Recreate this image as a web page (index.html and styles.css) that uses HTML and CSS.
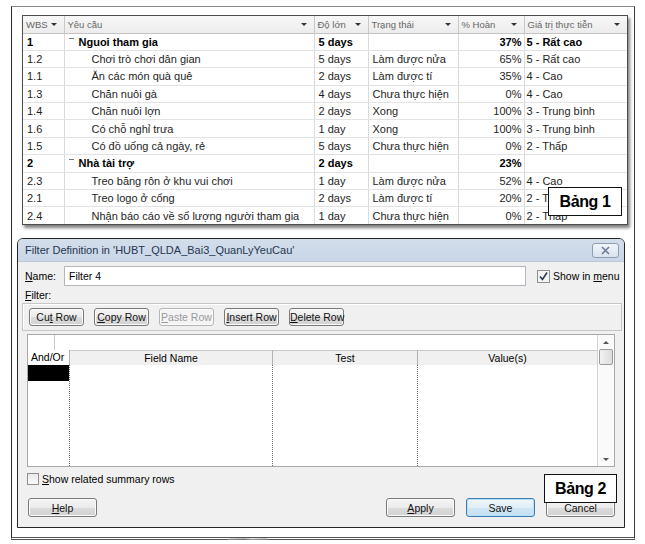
FILE: index.html
```html
<!DOCTYPE html>
<html lang="vi">
<head>
	<meta charset="UTF-8">
	<title>Bảng 1 - Bảng 2</title>
	<link rel="stylesheet" href="styles.css">
</head>
<body>
	<div class="frame">
		<div class="sheet">
			<table class="tasks">
				<colgroup>
					<col style="width:41px">
					<col style="width:250px">
					<col style="width:54px">
					<col style="width:90px">
					<col style="width:66px">
					<col>
				</colgroup>
				<thead>
					<tr>
						<th><div class="th"><span>WBS</span><i class="dd"></i></div></th>
						<th><div class="th"><span>Yêu cầu</span><i class="dd"></i></div></th>
						<th><div class="th"><span>Độ lớn</span><i class="dd"></i></div></th>
						<th><div class="th"><span>Trạng thái</span><i class="dd"></i></div></th>
						<th><div class="th"><span>% Hoàn</span><i class="dd"></i></div></th>
						<th><div class="th"><span>Giá trị thực tiễn</span><i class="dd"></i></div></th>
					</tr>
				</thead>
				<tbody>
					<tr class="sum">
						<td>1</td><td class="grp"><i class="minus"></i>Nguoi tham gia</td><td>5 days</td><td></td><td class="pct">37%</td><td class="val">5 - Rất cao</td>
					</tr>
					<tr>
						<td>1.2</td><td class="task">Chơi trò chơi dân gian</td><td>5 days</td><td>Làm được nửa</td><td class="pct">65%</td><td class="val">5 - Rất cao</td>
					</tr>
					<tr>
						<td>1.1</td><td class="task">Ăn các món quà quê</td><td>2 days</td><td>Làm được tí</td><td class="pct">35%</td><td class="val">4 - Cao</td>
					</tr>
					<tr>
						<td>1.3</td><td class="task">Chăn nuôi gà</td><td>4 days</td><td>Chưa thực hiện</td><td class="pct">0%</td><td class="val">4 - Cao</td>
					</tr>
					<tr>
						<td>1.4</td><td class="task">Chăn nuôi lợn</td><td>2 days</td><td>Xong</td><td class="pct">100%</td><td class="val">3 - Trung bình</td>
					</tr>
					<tr>
						<td>1.6</td><td class="task">Có chỗ nghỉ trưa</td><td>1 day</td><td>Xong</td><td class="pct">100%</td><td class="val">3 - Trung bình</td>
					</tr>
					<tr>
						<td>1.5</td><td class="task">Có đồ uống cả ngày, rẻ</td><td>5 days</td><td>Chưa thực hiện</td><td class="pct">0%</td><td class="val">2 - Thấp</td>
					</tr>
					<tr class="sum">
						<td>2</td><td class="grp"><i class="minus"></i>Nhà tài trợ</td><td>2 days</td><td></td><td class="pct">23%</td><td class="val"></td>
					</tr>
					<tr>
						<td>2.3</td><td class="task">Treo băng rôn ở khu vui chơi</td><td>1 day</td><td>Làm được nửa</td><td class="pct">52%</td><td class="val">4 - Cao</td>
					</tr>
					<tr>
						<td>2.1</td><td class="task">Treo logo ở cổng</td><td>2 days</td><td>Làm được tí</td><td class="pct">20%</td><td class="val">2 - Thấp</td>
					</tr>
					<tr>
						<td>2.4</td><td class="task">Nhận báo cáo về số lượng người tham gia</td><td>1 day</td><td>Chưa thực hiện</td><td class="pct">0%</td><td class="val">2 - Thấp</td>
					</tr>
				</tbody>
			</table>
			<div class="caption cap1">Bảng 1</div>
		</div>

		<div class="dialog">
			<div class="titlebar">
				<span class="title">Filter Definition in 'HUBT_QLDA_Bai3_QuanLyYeuCau'</span>
				<span class="close">
					<svg width="13" height="9" viewBox="0 0 13 9"><path d="M3 1 L10 8 M10 1 L3 8" stroke="#6b7b92" stroke-width="1.6" fill="none"/></svg>
				</span>
			</div>
			<div class="dbody">
				<div class="namerow">
					<label class="lbl"><u>N</u>ame:</label>
					<div class="input">Filter 4</div>
					<span class="check on">
						<svg width="11" height="11" viewBox="0 0 11 11"><path d="M2 5.5 L4.5 8.5 L9 1.5" stroke="#2c3b4f" stroke-width="1.6" fill="none"/></svg>
					</span>
					<span class="nowrap">Show in <u>m</u>enu</span>
				</div>
				<div class="filterlbl"><u>F</u>ilter:</div>
				<div class="toolbar">
					<button class="btn">Cu<u>t</u> Row</button>
					<button class="btn"><u>C</u>opy Row</button>
					<button class="btn off"><u>P</u>aste Row</button>
					<button class="btn"><u>I</u>nsert Row</button>
					<button class="btn"><u>D</u>elete Row</button>
				</div>
				<div class="fgrid">
					<div class="fmain">
						<div class="fcorner"><span></span></div>
						<div class="frow fhead">
							<div class="andor">And/Or</div>
							<div>Field Name</div>
							<div>Test</div>
							<div>Value(s)</div>
						</div>
						<div class="frow fbody">
							<div><div class="sel"></div></div>
							<div></div>
							<div></div>
							<div></div>
						</div>
					</div>
					<div class="vscroll">
						<i class="up"></i>
						<div class="thumb"></div>
						<div class="track"></div>
						<i class="down"></i>
					</div>
				</div>
				<div class="sumrow">
					<span class="check"></span>
					<span class="nowrap"><u>S</u>how related summary rows</span>
				</div>
				<div class="btnrow">
					<button class="btn big"><u>H</u>elp</button>
					<div class="btngroup">
						<button class="btn big"><u>A</u>pply</button>
						<button class="btn big save">Save</button>
						<button class="btn big">Cancel</button>
					</div>
				</div>
			</div>
			<div class="caption cap2">Bảng 2</div>
		</div>
		<div class="blob"></div>
	</div>
</body>
</html>
```

FILE: styles.css
```css
*{
	margin: 0;
	padding: 0;
	box-sizing: border-box;
}
body{
	background: #fff;
	font-family: "Liberation Sans", Arial, sans-serif;
	color: #111;
}
.nowrap{
	white-space: nowrap;
}
.frame{
	position: relative;
	width: 624px;
	height: 534px;
	margin: 6px 0 0 11px;
	padding-top: 8px;
	border: 1px solid #8a8a8a;
	border-left-color: #2a2a2a;
	border-right-color: #3a3a3a;
	border-bottom: 3px double #555;
}
/* ---------- bang 1 ---------- */
.sheet{
	position: relative;
	width: 606px;
	margin-left: 10px;
	border: 1px solid #4d4d4d;
	box-shadow: 2px 3px 3px rgba(0,0,0,0.5);
	background: #fff;
}
.tasks{
	width: 100%;
	border-collapse: collapse;
	table-layout: fixed;
	font-size: 11px;
}
.tasks th{
	height: 17px;
	padding: 0;
	font-weight: normal;
	font-size: 9.5px;
	color: #666;
	background: linear-gradient(#f7f7f7, #ececec);
	border-right: 1px solid #c9c9c9;
	border-bottom: 1px solid #c4c4c4;
	text-align: left;
}
.th{
	display: flex;
	align-items: center;
	justify-content: space-between;
	padding: 0 7px 0 3px;
	white-space: nowrap;
}
.dd{
	width: 0;
	height: 0;
	border-left: 3px solid transparent;
	border-right: 3px solid transparent;
	border-top: 3px solid #333;
}
.tasks td{
	height: 17.4px;
	padding: 0 0 0 4px;
	border-right: 1px solid #dadada;
	border-bottom: 1px solid #e3e3e3;
	white-space: nowrap;
	overflow: hidden;
	color: #1e1e1e;
}
.tasks tr:last-child td{
	border-bottom: none;
}
.tasks td:last-child,
.tasks th:last-child{
	border-right: none;
}
.tasks .sum td{
	font-weight: bold;
	color: #000;
}
.tasks td.grp{
	padding-left: 4px;
}
.tasks td.task{
	padding-left: 27px;
}
.tasks td.pct{
	text-align: right;
	padding: 0 2px 0 0;
}
.tasks td.val{
	padding-left: 2px;
}
.minus{
	display: inline-block;
	width: 5px;
	height: 1px;
	margin: 0 5px 0 0;
	vertical-align: 7px;
	background: #777;
}
.caption{
	position: absolute;
	width: 74px;
	height: 29px;
	border: 1px solid #111;
	background: #fff;
	font-size: 16px;
	font-weight: bold;
	letter-spacing: -0.4px;
	line-height: 27px;
	text-align: center;
	color: #000;
}
.cap1{
	right: 5px;
	bottom: 8px;
}
/* ---------- bang 2: dialog ---------- */
.dialog{
	position: relative;
	width: 608px;
	height: 290px;
	margin: 13px 0 0 5px;
	border: 1px solid #262626;
	border-radius: 6px 6px 0 0;
	background: #f0f0f0;
	font-size: 10.5px;
	color: #000;
}
.titlebar{
	height: 23px;
	display: flex;
	align-items: center;
	justify-content: space-between;
	padding: 0 5px 0 7px;
	border-radius: 5px 5px 0 0;
	background: linear-gradient(#d3deeb, #c8d6e7);
	border-bottom: 1px solid #b9c8da;
}
.title{
	font-size: 11px;
	color: #26374f;
}
.close{
	width: 27px;
	height: 15px;
	display: flex;
	align-items: center;
	justify-content: center;
	border: 1px solid #8c9db4;
	border-radius: 3px;
	background: linear-gradient(#f1f5fa, #d9e2ee);
}
.dbody{
	padding: 0 9px 0 0;
}
.namerow{
	display: flex;
	align-items: center;
	height: 20px;
	margin-top: 4px;
	padding-left: 7px;
}
.lbl{
	width: 39px;
	flex: none;
}
.input{
	flex: none;
	width: 462px;
	height: 20px;
	padding: 0 4px;
	line-height: 18px;
	border: 1px solid #b4b7bd;
	background: #fff;
}
.check{
	flex: none;
	width: 13px;
	height: 13px;
	margin: 0 3px 0 11px;
	display: flex;
	align-items: center;
	justify-content: center;
	border: 1px solid #8d8f91;
	background: linear-gradient(#e9e9e9, #fbfbfb);
}
.check.on{
	background: #f4f4f4;
}
.filterlbl{
	margin: 3px 0 0 7px;
	line-height: 13px;
}
.toolbar{
	display: flex;
	gap: 10px;
	width: 600px;
	height: 28px;
	margin: 1px 0 0 4px;
	padding: 4px 0 0 6px;
	border: 1px solid #c6c6c6;
	box-shadow: inset 1px 1px 0 #fff;
}
.btn{
	flex: none;
	width: 55px;
	height: 18px;
	padding: 0;
	white-space: nowrap;
	font-family: inherit;
	font-size: 10.5px;
	color: #111;
	border: 1px solid #7a7a7a;
	border-radius: 3px;
	background: linear-gradient(#f5f5f5 0%, #ebebeb 50%, #dcdcdc 51%, #d2d2d2 100%);
	box-shadow: inset 0 0 0 1px #fbfbfb;
}
.btn.off{
	color: #9a9a9a;
	border-color: #b3b6b8;
	background: #f4f4f4;
}
.fgrid{
	display: flex;
	width: 588px;
	height: 133px;
	margin: 3px 0 0 9px;
	border: 1px solid #a8a8a8;
	background: #fff;
}
.fmain{
	flex: 1;
	display: flex;
	flex-direction: column;
}
.fcorner{
	height: 15px;
}
.fcorner span{
	display: block;
	width: 27px;
	height: 15px;
	border-right: 1px solid #c8c8c8;
}
.frow{
	display: grid;
	grid-template-columns: 42px 203px 145px 1fr;
}
.fhead{
	height: 15px;
	line-height: 14px;
	text-align: center;
	border-bottom: 1px solid #9f9f9f;
}
.fhead div{
	background: #f0f0f0;
	border-top: 1px solid #c9c9c9;
	border-right: 1px solid #b2b2b2;
}
.fhead div:last-child{
	border-right: none;
}
.fhead .andor{
	background: #fff;
	border-top: none;
	text-align: left;
	padding-left: 3px;
	line-height: 15px;
}
.fbody{
	flex: 1;
}
.fbody > div{
	border-right: 1px dotted #6f6f6f;
}
.fbody > div:last-child{
	border-right: none;
}
.sel{
	height: 16px;
	background: #000;
}
.vscroll{
	width: 17px;
	display: flex;
	flex-direction: column;
	align-items: center;
	border-left: 1px solid #d2d2d2;
	background: #fafafa;
}
.up,
.down{
	width: 0;
	height: 0;
	border-left: 3px solid transparent;
	border-right: 3px solid transparent;
}
.up{
	margin: 6px 0 5px;
	border-bottom: 3px solid #555;
}
.down{
	margin: 0 0 5px;
	border-top: 3px solid #555;
}
.thumb{
	width: 14px;
	height: 16px;
	border: 1px solid #9a9a9a;
	border-radius: 2px;
	background: linear-gradient(90deg, #f2f2f2, #dcdcdc);
}
.track{
	flex: 1;
}
.sumrow{
	display: flex;
	align-items: center;
	height: 12px;
	margin: 6px 0 0 9px;
}
.sumrow .check{
	width: 12px;
	height: 12px;
	margin: 0 3px 0 0;
}
.btnrow{
	display: flex;
	justify-content: space-between;
	margin: 13px 0 0 10px;
}
.btngroup{
	display: flex;
	gap: 11px;
}
.btn.big{
	width: 69px;
	height: 19px;
}
.btn.save{
	border-color: #3d7fb4;
	box-shadow: inset 0 0 0 1px #b8e0f6;
	background: linear-gradient(#eef6fb 0%, #e0eef8 50%, #cfe5f4 51%, #c6e0f2 100%);
}
.cap2{
	right: 7px;
	top: 235px;
	width: 73px;
}
.blob{
	position: absolute;
	left: 216px;
	top: 531px;
	width: 40px;
	height: 7px;
	background: linear-gradient(90deg, #bbb, #888 40%, #ccc 60%, #999);
	border-radius: 2px 2px 0 0;
	opacity: 0.6;
}
```
